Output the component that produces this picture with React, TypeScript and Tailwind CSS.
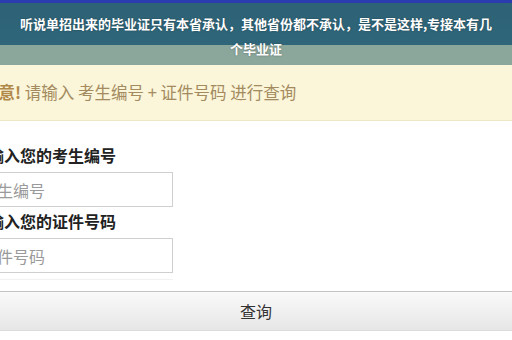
export default function App() {
  const cjk = { fontFamily: '"Noto Sans CJK SC", "Noto Sans", sans-serif' };

  return (
    <div className="w-[512px] h-[340px] overflow-hidden bg-white" style={cjk}>
      {/* Title bar */}
      <div className="border-t-[3px] border-[#2b3cae] bg-[linear-gradient(to_bottom,#2e6276_0px,#2f6679_42px,#8ba69b_42px,#8ba69b_62px,#b7c7a9_62px,#b7c7a9_65px)] h-[65px] px-4 pt-[8px]">
        <h1 className="text-center text-white font-bold text-[13px] leading-[25px] [text-shadow:0_0_2px_rgba(0,0,0,0.35)]">
          听说单招出来的毕业证只有本省承认，其他省份都不承认，是不是这样,专接本有几个毕业证
        </h1>
      </div>

      {/* Notice */}
      <div className="h-[56px] bg-[#fbf5d9] border-b border-[#efe6c6] flex items-center -ml-[18px]">
        <p className="text-[16.5px] text-[#a38b5f]">
          <span className="font-bold text-[#b0894a]">注意!</span> 请输入 考生编号 + 证件号码 进行查询
        </p>
      </div>

      {/* Form */}
      <div className="-ml-[28px] mt-[24px] flex flex-col">
        <label className="text-[16px] leading-[20px] font-bold text-[#222]">请输入您的考生编号</label>
        <div className="mt-[7px] w-[201px] h-[35px] border border-[#cfcfcf] flex items-center pl-[8px]">
          <span className="text-[16px] text-[#9a9a9a]">考生编号</span>
        </div>
        <label className="mt-[4px] text-[16px] leading-[20px] font-bold text-[#222]">请输入您的证件号码</label>
        <div className="mt-[7px] w-[201px] h-[35px] border border-[#cfcfcf] flex items-center pl-[8px]">
          <span className="text-[16px] text-[#9a9a9a]">证件号码</span>
        </div>
        <div className="mt-[6px] w-[201px] border-t border-[#f2f2f2]" />
      </div>

      {/* Submit */}
      <button className="mt-[11px] w-full h-[40px] border-t border-b border-t-[#c4c4c4] border-b-[#dcdcdc] bg-[linear-gradient(to_bottom,#fafafa,#e6e6e6)] text-[16px] text-[#333]">
        查询
      </button>
    </div>
  );
}
